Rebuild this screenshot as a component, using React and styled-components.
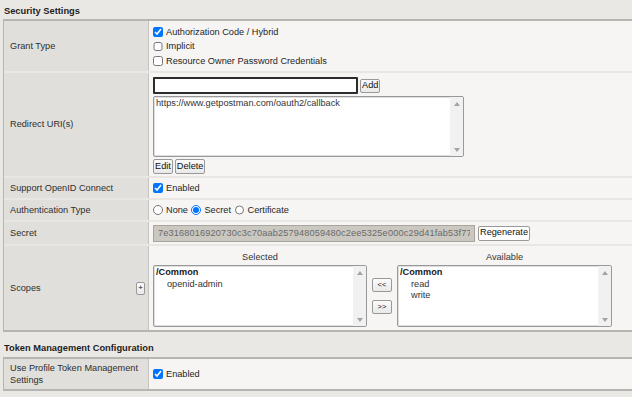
import React from "react";
import styled, { createGlobalStyle } from "styled-components";

const GlobalStyle = createGlobalStyle`
  body {
    margin: 0;
    background: #e9e8e4;
    font-family: "Liberation Sans", Arial, sans-serif;
    font-size: 9.2px;
    color: #222;
  }
`;

const Page = styled.div`
  width: 632px;
  overflow: hidden;
`;

const SectionTitle = styled.div`
  height: ${(p) => p.$h}px;
  box-sizing: border-box;
  padding: 0 0 ${(p) => p.$pb}px 4px;
  display: flex;
  align-items: flex-end;
  font-weight: bold;
  font-size: 9.3px;
  line-height: 11px;
  color: #1e1e1e;
`;

const Table = styled.div`
  margin-left: 3px;
  border-top: 2px solid #b6b5b1;
  border-bottom: 2px solid #b6b5b1;
  border-left: 1px solid #b6b5b1;
  background: #e8e7e3;
  display: flex;
  flex-direction: column;
  gap: 2px;
`;

const Row = styled.div`
  display: grid;
  grid-template-columns: 145px 1fr;
  height: ${(p) => p.$h}px;
`;

const Label = styled.div`
  background: #e0dfdb;
  border-right: 1px solid #c4c3bf;
  padding: 0 3px 0 6px;
  display: flex;
  align-items: center;
  justify-content: space-between;
  color: #2e2e2e;
  line-height: 12.5px;
`;

const Value = styled.div`
  background: #f6f5f3;
  padding: ${(p) => p.$pad || "0 4px"};
  display: flex;
  flex-direction: ${(p) => (p.$column ? "column" : "row")};
  align-items: ${(p) => (p.$column ? "flex-start" : "center")};
  gap: ${(p) => p.$gap || 0}px;
  color: #1e1e1e;
  min-width: 0;
`;

const Option = styled.label`
  display: flex;
  align-items: center;
  gap: 3.5px;
  height: ${(p) => p.$h || 14.5}px;
  white-space: nowrap;
`;

const CheckBox = styled.input.attrs({ type: "checkbox" })`
  width: 9.5px;
  height: 9.5px;
  margin: 0;
`;

const Radio = styled.input.attrs({ type: "radio" })`
  width: 9.5px;
  height: 9.5px;
  margin: 0;
`;

const RadioGroup = styled.div`
  display: flex;
  align-items: center;
  gap: 3.5px;
`;

const InlineRow = styled.div`
  display: flex;
  align-items: center;
  gap: ${(p) => p.$gap || 2}px;
`;

const TextField = styled.input`
  width: 205px;
  height: 17px;
  box-sizing: border-box;
  border: 2px solid #2c2c2c;
  border-radius: 1px;
  background: #fff;
  padding: 0 2px;
  font: inherit;
`;

const SecretField = styled.input`
  width: 322px;
  height: 17px;
  box-sizing: border-box;
  border: 1px solid #a8a59f;
  background: #cbc8c1;
  color: #6a6a6a;
  padding: 0 4px;
  font: inherit;
  letter-spacing: 0.15px;
`;

const Button = styled.button`
  height: ${(p) => p.$h || 15}px;
  min-width: ${(p) => p.$w || 0}px;
  box-sizing: border-box;
  padding: 0 1px;
  border: 1px solid #999;
  border-radius: 2px;
  background: ${(p) => (p.$light ? "#fff" : "linear-gradient(#fbfbfb, #e9e9e9)")};
  font-family: "Liberation Sans", Arial, sans-serif;
  font-size: ${(p) => p.$fs || 9.2}px;
  color: #111;
  line-height: 1;
  display: flex;
  align-items: center;
  justify-content: center;
`;

const ListFrame = styled.div`
  width: ${(p) => p.$w}px;
  height: ${(p) => p.$h}px;
  box-sizing: border-box;
  border: 1px solid #999;
  border-radius: 2px;
  box-shadow: inset 0 0 0 1px #dedede;
  background: #fff;
  display: flex;
  overflow: hidden;
`;

const ListContent = styled.div`
  flex: 1;
  padding: 1px 2px;
  line-height: 11.5px;
  color: #333;
`;

const ListItem = styled.div`
  padding-left: ${(p) => (p.$indent ? 11 : 0)}px;
  font-weight: ${(p) => (p.$bold ? "bold" : "normal")};
  color: ${(p) => (p.$bold ? "#1a1a1a" : "#333")};
`;

const ScrollTrack = styled.div`
  width: 13px;
  background: #f1f1f1;
  display: flex;
  flex-direction: column;
  justify-content: space-between;
  align-items: center;
  padding: 5px 0 4px;
`;

const ScopesWrap = styled.div`
  display: flex;
  align-items: flex-end;
  gap: 5px;
`;

const ScopeColumn = styled.div`
  display: flex;
  flex-direction: column;
  align-items: stretch;
  gap: 2px;
`;

const ColumnTitle = styled.div`
  text-align: center;
  line-height: 12px;
  color: #333;
`;

const MoveButtons = styled.div`
  height: 62px;
  display: flex;
  flex-direction: column;
  justify-content: center;
  gap: 8px;
`;

const Arrow = ({ up }) => (
  <svg width="6" height="4" viewBox="0 0 6 4">
    <polygon points={up ? "0,4 3,0 6,4" : "0,0 6,0 3,4"} fill="#a3a3a3" />
  </svg>
);

const ListBox = ({ w, h, children }) => (
  <ListFrame $w={w} $h={h}>
    <ListContent>{children}</ListContent>
    <ScrollTrack>
      <Arrow up />
      <Arrow />
    </ScrollTrack>
  </ListFrame>
);

export default function App() {
  return (
    <Page>
      <GlobalStyle />
      <SectionTitle $h={19} $pb={2}>Security Settings</SectionTitle>
      <Table>
        <Row $h={50}>
          <Label>Grant Type</Label>
          <Value $column $pad="3.5px 4px 0">
            <Option>
              <CheckBox defaultChecked />
              Authorization Code / Hybrid
            </Option>
            <Option>
              <CheckBox />
              Implicit
            </Option>
            <Option>
              <CheckBox />
              Resource Owner Password Credentials
            </Option>
          </Value>
        </Row>
        <Row $h={103}>
          <Label>Redirect URI(s)</Label>
          <Value $column $gap={2} $pad="4px 4px 0">
            <InlineRow $gap={2}>
              <TextField />
              <Button $h={14}>Add</Button>
            </InlineRow>
            <ListBox w={311} h={61}>
              https://www.getpostman.com/oauth2/callback
            </ListBox>
            <InlineRow $gap={2}>
              <Button $w={19}>Edit</Button>
              <Button $w={29}>Delete</Button>
            </InlineRow>
          </Value>
        </Row>
        <Row $h={20}>
          <Label>Support OpenID Connect</Label>
          <Value>
            <Option>
              <CheckBox defaultChecked />
              Enabled
            </Option>
          </Value>
        </Row>
        <Row $h={20}>
          <Label>Authentication Type</Label>
          <Value>
            <RadioGroup>
              <Option>
                <Radio name="auth" />
                None
              </Option>
              <Option>
                <Radio name="auth" defaultChecked />
                Secret
              </Option>
              <Option>
                <Radio name="auth" />
                Certificate
              </Option>
            </RadioGroup>
          </Value>
        </Row>
        <Row $h={22}>
          <Label>Secret</Label>
          <Value>
            <InlineRow $gap={3}>
              <SecretField
                readOnly
                value="7e3168016920730c3c70aab257948059480c2ee5325e000c29d41fab53f77e1"
              />
              <Button $light $w={52}>Regenerate</Button>
            </InlineRow>
          </Value>
        </Row>
        <Row $h={84}>
          <Label>
            Scopes
            <Button $h={13} $w={8} $fs={8}>+</Button>
          </Label>
          <Value $column $pad="5px 4px 0">
            <ScopesWrap>
              <ScopeColumn>
                <ColumnTitle>Selected</ColumnTitle>
                <ListBox w={214} h={62}>
                  <ListItem $bold>/Common</ListItem>
                  <ListItem $indent>openid-admin</ListItem>
                </ListBox>
              </ScopeColumn>
              <MoveButtons>
                <Button $h={14} $w={20} $fs={7.5}>&lt;&lt;</Button>
                <Button $h={14} $w={20} $fs={7.5}>&gt;&gt;</Button>
              </MoveButtons>
              <ScopeColumn>
                <ColumnTitle>Available</ColumnTitle>
                <ListBox w={215} h={62}>
                  <ListItem $bold>/Common</ListItem>
                  <ListItem $indent>read</ListItem>
                  <ListItem $indent>write</ListItem>
                </ListBox>
              </ScopeColumn>
            </ScopesWrap>
          </Value>
        </Row>
      </Table>
      <SectionTitle $h={25} $pb={3}>Token Management Configuration</SectionTitle>
      <Table>
        <Row $h={30}>
          <Label>Use Profile Token Management Settings</Label>
          <Value>
            <Option>
              <CheckBox defaultChecked />
              Enabled
            </Option>
          </Value>
        </Row>
      </Table>
    </Page>
  );
}
